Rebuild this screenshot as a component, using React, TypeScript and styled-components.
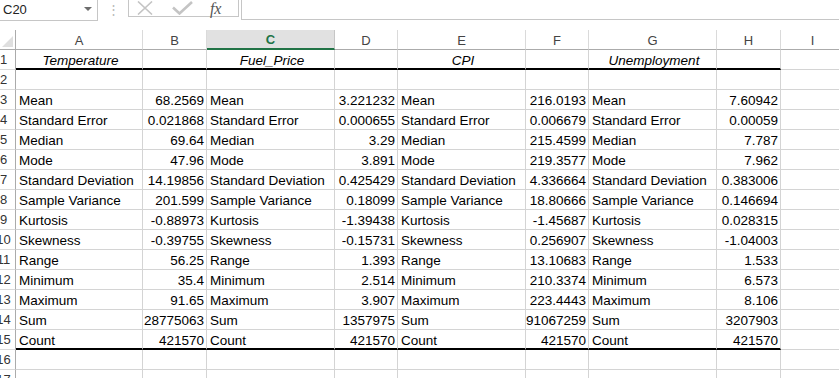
import React from "react";
import styled, { createGlobalStyle } from "styled-components";

const GlobalStyle = createGlobalStyle`
  html, body {
    margin: 0;
    padding: 0;
    background: #ffffff;
    overflow: hidden;
  }
  body {
    font-family: "Liberation Sans", Arial, sans-serif;
  }
`;

const COLS = ["A", "B", "C", "D", "E", "F", "G", "H", "I"];
const WIDTHS = [127, 64, 128, 63, 128, 63, 128, 64, 64];

const Page = styled.div`
  width: 839px;
  height: 378px;
  overflow: hidden;
  display: flex;
  flex-direction: column;
`;

const FormulaBar = styled.div`
  display: flex;
  align-items: flex-start;
  height: 20px;
`;

const NameBox = styled.div`
  box-sizing: border-box;
  width: 98px;
  height: 21px;
  border-right: 1px solid #c6c6c6;
  border-bottom: 1px solid #c6c6c6;
  display: flex;
  align-items: center;
  justify-content: space-between;
  padding: 0 4px 2px 3px;
  font-size: 13px;
  color: #222;
`;

const DropArrow = styled.span`
  width: 0;
  height: 0;
  border-left: 4px solid transparent;
  border-right: 4px solid transparent;
  border-top: 4px solid #6d6d6d;
  margin-right: 1px;
`;

const Dots = styled.div`
  width: 30px;
  height: 18px;
  display: flex;
  align-items: center;
  justify-content: center;
  color: #b8b8b8;
  font-size: 13px;
  line-height: 1;
`;

const IconBox = styled.div`
  box-sizing: border-box;
  width: 111px;
  height: 17px;
  border-left: 1px solid #c6c6c6;
  border-right: 1px solid #c6c6c6;
  border-bottom: 1px solid #c6c6c6;
  display: flex;
  align-items: center;
  padding-left: 7px;
  gap: 17px;
`;

const Fx = styled.span`
  font-family: "Liberation Serif", "Times New Roman", serif;
  font-style: italic;
  font-size: 16px;
  line-height: 16px;
  color: #555555;
  margin-left: 0;
  padding-top: 2px;
  letter-spacing: -0.3px;
`;

const FormulaInput = styled.div`
  box-sizing: border-box;
  flex: 1;
  height: 20px;
  margin-left: 2px;
  border-left: 1px solid #c6c6c6;
  border-bottom: 1px solid #c6c6c6;
`;

const Sheet = styled.div`
  margin-top: 10px;
  display: grid;
  grid-template-columns: 16px ${WIDTHS.map((w) => `${w}px`).join(" ")};
  grid-auto-rows: 20px;
`;

const Corner = styled.div`
  box-sizing: border-box;
  border-right: 1px solid #ababab;
  border-bottom: 1px solid #ababab;
  position: relative;
  overflow: hidden;
`;

const CornerTriangle = styled.svg`
  position: absolute;
  right: 2px;
  bottom: 2px;
`;

const ColHeader = styled.div<{ $active?: boolean }>`
  box-sizing: border-box;
  border-right: 1px solid ${(p) => (p.$active ? "#c6c6c6" : "#dadada")};
  border-bottom: ${(p) => (p.$active ? "2px solid #217346" : "1px solid #ababab")};
  background: ${(p) => (p.$active ? "#e1e1e1" : "#ffffff")};
  color: ${(p) => (p.$active ? "#217346" : "#444444")};
  font-weight: ${(p) => (p.$active ? "bold" : "normal")};
  font-size: 13px;
  display: flex;
  align-items: center;
  justify-content: center;
  padding-top: 1px;
`;

const RowHeader = styled.div`
  box-sizing: border-box;
  border-right: 1px solid #ababab;
  border-bottom: 1px solid #dadada;
  overflow: hidden;
  font-size: 13px;
  color: #333333;
  line-height: 19px;
`;

const RowNum = styled.span`
  display: block;
  width: 28px;
  margin-left: -10.5px;
  text-align: center;
`;

const Cell = styled.div<{ $num?: boolean; $title?: boolean; $rule?: boolean }>`
  box-sizing: border-box;
  border-right: 1px solid #d4d4d4;
  border-bottom: ${(p) => (p.$rule ? "2px solid #000000" : "1px solid #d4d4d4")};
  font-size: 13.5px;
  line-height: 19px;
  color: #000000;
  white-space: nowrap;
  overflow: visible;
  padding: ${(p) => (p.$num ? "1px 2px 0 0" : "1px 0 0 3px")};
  text-align: ${(p) => (p.$num ? "right" : p.$title ? "center" : "left")};
  font-style: ${(p) => (p.$title ? "italic" : "normal")};
`;

const CrossIcon = () => (
  <svg width="19" height="14" viewBox="0 0 19 14">
    <path d="M2 0.5 L16 13.5 M16 0.5 L2 13.5" stroke="#c4c4c4" strokeWidth="1.6" fill="none" />
  </svg>
);

const CheckIcon = () => (
  <svg width="21" height="14" viewBox="0 0 21 14">
    <path d="M1 6.5 L7.5 12.5 L20 1" stroke="#c4c4c4" strokeWidth="2.6" fill="none" />
  </svg>
);

const titles = ["Temperature", "", "Fuel_Price", "", "CPI", "", "Unemployment", "", ""];

const stats: [string, string, string, string, string][] = [
  ["Mean", "68.2569", "3.221232", "216.0193", "7.60942"],
  ["Standard Error", "0.021868", "0.000655", "0.006679", "0.00059"],
  ["Median", "69.64", "3.29", "215.4599", "7.787"],
  ["Mode", "47.96", "3.891", "219.3577", "7.962"],
  ["Standard Deviation", "14.19856", "0.425429", "4.336664", "0.383006"],
  ["Sample Variance", "201.599", "0.18099", "18.80666", "0.146694"],
  ["Kurtosis", "-0.88973", "-1.39438", "-1.45687", "0.028315"],
  ["Skewness", "-0.39755", "-0.15731", "0.256907", "-1.04003"],
  ["Range", "56.25", "1.393", "13.10683", "1.533"],
  ["Minimum", "35.4", "2.514", "210.3374", "6.573"],
  ["Maximum", "91.65", "3.907", "223.4443", "8.106"],
  ["Sum", "28775063", "1357975", "91067259", "3207903"],
  ["Count", "421570", "421570", "421570", "421570"],
];

type CellData = { text: string; num?: boolean; title?: boolean };

const buildRows = (): CellData[][] => {
  const rows: CellData[][] = [];
  rows.push(titles.map((t) => ({ text: t, title: true })));
  rows.push(COLS.map(() => ({ text: "" })));
  stats.forEach(([label, ...vals]) => {
    const row: CellData[] = [];
    vals.forEach((v) => {
      row.push({ text: label });
      row.push({ text: v, num: true });
    });
    row.push({ text: "" });
    rows.push(row);
  });
  rows.push(COLS.map(() => ({ text: "" })));
  rows.push(COLS.map(() => ({ text: "" })));
  return rows;
};

export default function App() {
  const rows = buildRows();
  return (
    <Page>
      <GlobalStyle />
      <FormulaBar>
        <NameBox>
          <span>C20</span>
          <DropArrow />
        </NameBox>
        <Dots>⋮</Dots>
        <IconBox>
          <CrossIcon />
          <CheckIcon />
          <Fx>fx</Fx>
        </IconBox>
        <FormulaInput />
      </FormulaBar>
      <Sheet>
        <Corner>
          <CornerTriangle width="11" height="11" viewBox="0 0 11 11">
            <polygon points="11,0 11,11 0,11" fill="#dfdfdf" />
          </CornerTriangle>
        </Corner>
        {COLS.map((c) => (
          <ColHeader key={c} $active={c === "C"}>
            {c}
          </ColHeader>
        ))}
        {rows.map((row, ri) => {
          const rowNo = ri + 1;
          const rule = rowNo === 1 || rowNo === 15;
          return (
            <React.Fragment key={rowNo}>
              <RowHeader>
                <RowNum>{rowNo}</RowNum>
              </RowHeader>
              {row.map((cell, ci) => (
                <Cell
                  key={ci}
                  $num={cell.num}
                  $title={cell.title}
                  $rule={rule && ci < 8}
                >
                  {cell.text}
                </Cell>
              ))}
            </React.Fragment>
          );
        })}
      </Sheet>
    </Page>
  );
}
